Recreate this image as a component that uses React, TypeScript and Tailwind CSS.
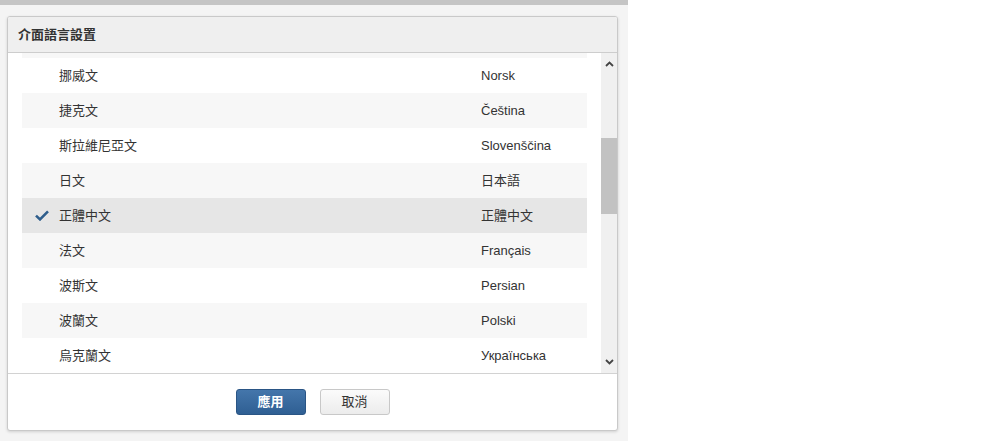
import React from "react";

const rows = [
  { name: "挪威文", native: "Norsk" },
  { name: "捷克文", native: "Čeština" },
  { name: "斯拉維尼亞文", native: "Slovenščina" },
  { name: "日文", native: "日本語" },
  { name: "正體中文", native: "正體中文", selected: true },
  { name: "法文", native: "Français" },
  { name: "波斯文", native: "Persian" },
  { name: "波蘭文", native: "Polski" },
  { name: "烏克蘭文", native: "Українська" },
];

function Check() {
  return (
    <svg width="14" height="11" viewBox="0 0 14 11">
      <path d="M1 5.6 L5 9.4 L13 1.4" fill="none" stroke="#2f5e8c" strokeWidth="2.6" />
    </svg>
  );
}

function Chevron({ down }: { down?: boolean }) {
  return (
    <svg width="9" height="6" viewBox="0 0 9 6">
      <path
        d={down ? "M1 1 L4.5 4.5 L8 1" : "M1 5 L4.5 1.5 L8 5"}
        fill="none"
        stroke="#444"
        strokeWidth="1.8"
      />
    </svg>
  );
}

export default function App() {
  return (
    <div
      className="w-[1000px] h-[441px] flex bg-white text-[#333] overflow-hidden"
      style={{ fontFamily: '"Liberation Sans", "Noto Sans CJK TC", sans-serif' }}
    >
      <div className="w-[628px] h-full flex flex-col bg-[#f4f4f4]">
        <div className="h-[5px] bg-[#c5c5c5]" />
        <div className="pt-[11px] pl-[7px]">
          {/* Dialog */}
          <div className="w-[611px] h-[415px] flex flex-col bg-white border border-[#c9c9c9] rounded-[3px] shadow-[0_1px_3px_rgba(0,0,0,0.15)] overflow-hidden">
            <div className="h-[36px] shrink-0 flex items-center px-[10px] bg-[#efefef] border-b border-[#cdcdcd] text-[13px] font-bold">
              介面語言設置
            </div>

            <div className="h-[320px] shrink-0 flex">
              <div className="flex-1 px-[14px] overflow-hidden">
                <div className="h-[5px] bg-[#f7f7f7]" />
                {rows.map((r, i) => (
                  <div
                    key={r.name}
                    className={
                      "h-[35px] flex items-center text-[13px] " +
                      (r.selected ? "bg-[#e6e6e6]" : i % 2 === 1 ? "bg-[#f7f7f7]" : "bg-white")
                    }
                  >
                    <div className="w-[37px] shrink-0 flex justify-center pl-[2px]">
                      {r.selected ? <Check /> : null}
                    </div>
                    <div className="w-[422px] shrink-0">{r.name}</div>
                    <div>{r.native}</div>
                  </div>
                ))}
              </div>
              {/* Scrollbar */}
              <div className="w-[16px] shrink-0 flex flex-col bg-[#f0f0f0]">
                <div className="h-[17px] flex items-end justify-center pb-[3px]">
                  <Chevron />
                </div>
                <div className="h-[68px]" />
                <div className="h-[76px] bg-[#c2c2c2]" />
                <div className="flex-1" />
                <div className="h-[17px] flex items-start justify-center pt-[3px]">
                  <Chevron down />
                </div>
              </div>
            </div>

            <div className="flex-1 flex justify-center items-start gap-[14px] pt-[15px] border-t border-[#d2d2d2]">
              <button className="w-[70px] h-[26px] rounded-[3px] border border-[#2a5585] bg-gradient-to-b from-[#4476ab] to-[#2f5f93] text-white text-[13px] font-bold">
                應用
              </button>
              <button className="w-[70px] h-[26px] rounded-[3px] border border-[#c8c8c8] bg-gradient-to-b from-[#fbfbfb] to-[#ececec] text-[#333] text-[13px]">
                取消
              </button>
            </div>
          </div>
        </div>
      </div>
    </div>
  );
}
